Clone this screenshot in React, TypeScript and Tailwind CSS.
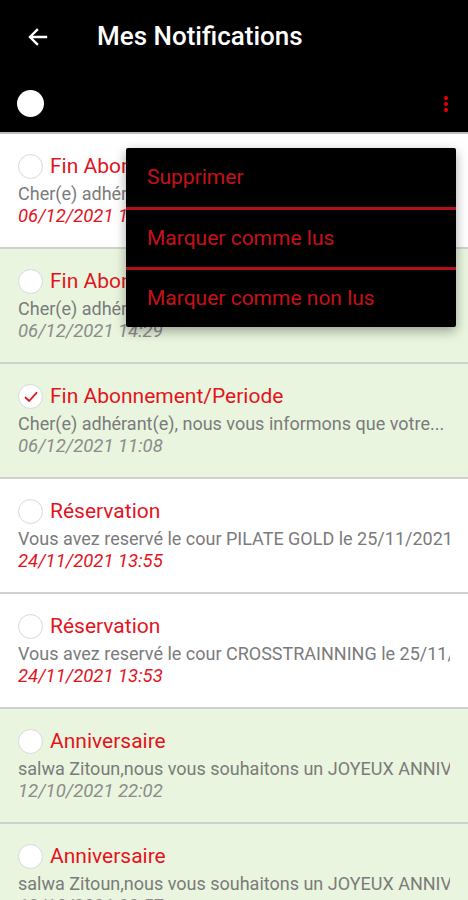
import React from 'react';

type Notif = {
  title: string;
  body: string;
  date: string;
  read: boolean;
  checked?: boolean;
};

const notifs: Notif[] = [
  { title: 'Fin Abonnement/Periode', body: 'Cher(e) adhérant(e), nous vous informons que votre...', date: '06/12/2021 14:29', read: false },
  { title: 'Fin Abonnement/Periode', body: 'Cher(e) adhérant(e), nous vous informons que votre...', date: '06/12/2021 14:29', read: true },
  { title: 'Fin Abonnement/Periode', body: 'Cher(e) adhérant(e), nous vous informons que votre...', date: '06/12/2021 11:08', read: true, checked: true },
  { title: 'Réservation', body: 'Vous avez reservé le cour PILATE GOLD le 25/11/2021 à 09:00', date: '24/11/2021 13:55', read: false },
  { title: 'Réservation', body: 'Vous avez reservé le cour CROSSTRAINNING le 25/11/2021 à 18:00', date: '24/11/2021 13:53', read: false },
  { title: 'Anniversaire', body: 'salwa Zitoun,nous vous souhaitons un JOYEUX ANNIVERSAIRE', date: '12/10/2021 22:02', read: true },
  { title: 'Anniversaire', body: 'salwa Zitoun,nous vous souhaitons un JOYEUX ANNIVERSAIRE', date: '12/10/2021 22:57', read: true },
];

function Check({ checked }: { checked?: boolean }) {
  return (
    <div className="w-[25px] h-[25px] rounded-full border-[1.5px] border-[#d9d9d9] bg-white flex items-center justify-center shrink-0">
      {checked && (
        <svg width="16" height="16" viewBox="0 0 16 16" fill="none">
          <path d="M2.5 8.5 L6.2 12 L13.5 3.8" stroke="#e0141c" strokeWidth="1.8" strokeLinecap="round" strokeLinejoin="round" />
        </svg>
      )}
    </div>
  );
}

function Row({ n }: { n: Notif }) {
  return (
    <div className={`h-[115px] border-b-2 border-[#cfd2cc] pl-[18px] pr-[18px] pt-[19px] ${n.read ? 'bg-[#e9f5de]' : 'bg-white'}`}>
      <div className="flex items-center gap-[7px] h-[27px]">
        <Check checked={n.checked} />
        <span className="text-[21px] text-[#e3141d] leading-none">{n.title}</span>
      </div>
      <div className="mt-[2px] text-[18px] leading-[23px] text-[#7b7b7b] whitespace-nowrap overflow-hidden">{n.body}</div>
      <div className={`text-[18.5px] leading-[23px] italic ${n.read ? 'text-[#8c8c8c]' : 'text-[#e3141d]'}`}>{n.date}</div>
    </div>
  );
}

export default function App() {
  return (
    <div className="relative w-[468px] h-[900px] overflow-hidden bg-white" style={{ fontFamily: 'Roboto, "Liberation Sans", sans-serif' }}>
      {/* header */}
      <div className="bg-black h-[134px] border-b-2 border-[#bdbdbd]">
        <div className="flex items-center h-[73px] pl-[26px]">
          <svg width="24" height="24" viewBox="0 0 24 24" fill="none">
            <path d="M20 12H4.5M11 5l-7 7 7 7" stroke="white" strokeWidth="2.4" strokeLinecap="square" />
          </svg>
          <span className="ml-[47px] text-white text-[26px] font-medium">Mes Notifications</span>
        </div>
        <div className="flex items-center justify-between h-[61px] pl-[17px] pr-[20px]">
          <div className="w-[27px] h-[27px] rounded-full bg-white" />
          <div className="flex flex-col gap-[2px] items-center">
            <span className="w-[4px] h-[4px] rounded-full bg-[#e00]" />
            <span className="w-[4px] h-[4px] rounded-full bg-[#e00]" />
            <span className="w-[4px] h-[4px] rounded-full bg-[#e00]" />
          </div>
        </div>
      </div>

      {notifs.map((n, i) => (
        <Row key={i} n={n} />
      ))}

      {/* popup menu */}
      <div className="absolute left-[126px] top-[148px] w-[330px] bg-black rounded-[2px] shadow-[0_4px_12px_rgba(0,0,0,0.35)]">
        {['Supprimer', 'Marquer comme lus', 'Marquer comme non lus'].map((t, i) => (
          <div key={t} className={`flex items-center pl-[21px] text-[21px] text-[#c8101a] ${i === 0 ? 'h-[62px]' : i === 1 ? 'h-[60px]' : 'h-[57px]'} ${i < 2 ? 'border-b-[3px] border-[#b5101a]' : ''}`}>
            {t}
          </div>
        ))}
      </div>
    </div>
  );
}
